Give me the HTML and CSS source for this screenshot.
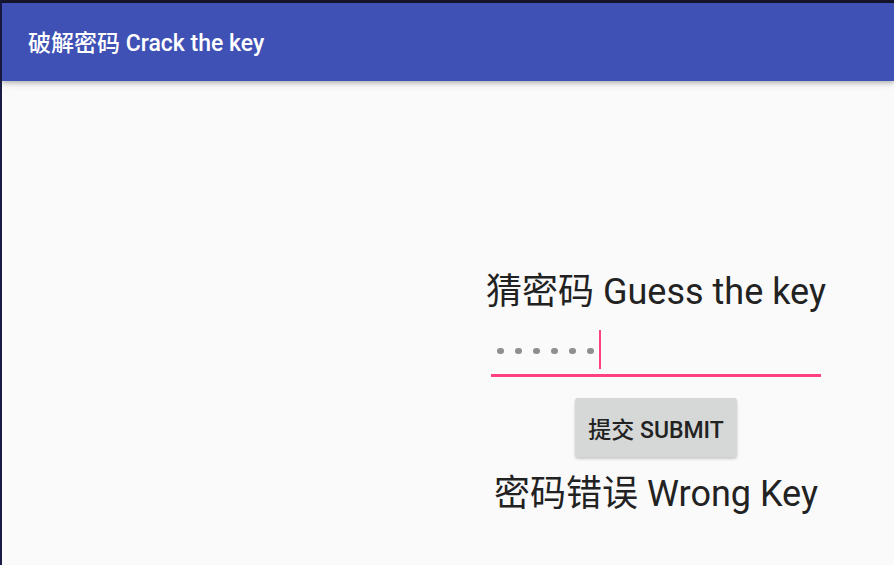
FILE: index.html
```html
<!DOCTYPE html>
<html lang="zh">
<head>
<meta charset="utf-8">
<link rel="stylesheet" href="styles.css">
</head>
<body>
<div class="screen">
  <header class="appbar">
    <h1 class="title">破解密码 Crack the key</h1>
  </header>
  <main class="content">
    <section class="panel">
      <h2 class="prompt">猜密码 Guess the key</h2>
      <div class="field">
        <span class="dots">
          <i class="dot"></i><i class="dot"></i><i class="dot"></i><i class="dot"></i><i class="dot"></i><i class="dot"></i>
        </span>
        <span class="cursor"></span>
      </div>
      <button class="submit" type="button">提交 SUBMIT</button>
      <p class="result">密码错误 Wrong Key</p>
    </section>
  </main>
</div>
</body>
</html>
```

FILE: styles.css
```css
* { box-sizing: border-box; }
html, body {
  margin: 0;
  padding: 0;
  width: 894px;
  height: 565px;
  overflow: hidden;
  background: #fafafa;
}
.screen {
  height: 565px;
  border-top: 3px solid #15162c;
  border-left: 2px solid #1b1c46;
  display: flex;
  flex-direction: column;
  font-family: Roboto, "Noto Sans CJK SC", sans-serif;
  color: #222;
}
.appbar {
  height: 78px;
  flex: none;
  background: #3f51b5;
  display: flex;
  align-items: center;
  padding-left: 26px;
  padding-top: 3px;
  position: relative;
  z-index: 1;
  box-shadow: 0 2px 4px rgba(0,0,0,0.22), 0 4px 8px rgba(0,0,0,0.08);
}
.title {
  margin: 0;
  font-size: 23px;
  font-weight: 500;
  color: #fff;
  line-height: 28px;
}
.content {
  flex: 1;
  display: flex;
  justify-content: flex-end;
  padding-right: 68px;
  padding-top: 188px;
}
.panel {
  width: 340px;
  display: flex;
  flex-direction: column;
  align-items: center;
}
.prompt {
  margin: 0;
  font-size: 36px;
  font-weight: 400;
  line-height: 46px;
  color: #222;
  white-space: nowrap;
}
.field {
  width: 330px;
  height: 52px;
  margin-top: 10px;
  border-bottom: 3px solid #ff4081;
  display: flex;
  align-items: center;
  padding-left: 6px;
  padding-bottom: 1px;
}
.dots {
  display: flex;
  gap: 11.6px;
  margin-top: 4px;
}
.dot {
  width: 6.5px;
  height: 6.5px;
  border-radius: 50%;
  background: #8f8f8f;
}
.cursor {
  width: 2px;
  height: 39px;
  background: #ff4081;
  margin-left: 5px;
  align-self: flex-end;
  margin-bottom: 4px;
}
.submit {
  margin-top: 21px;
  width: 162px;
  height: 59px;
  border: none;
  border-radius: 3px;
  background: #d6d7d7;
  box-shadow: 0 2px 3px rgba(0,0,0,0.2);
  font-family: Roboto, "Noto Sans CJK SC", sans-serif;
  font-size: 23px;
  font-weight: 500;
  color: #222;
  padding: 0;
}
.result {
  margin: 14px 0 0;
  font-size: 36px;
  line-height: 46px;
  color: #222;
  white-space: nowrap;
}
```
